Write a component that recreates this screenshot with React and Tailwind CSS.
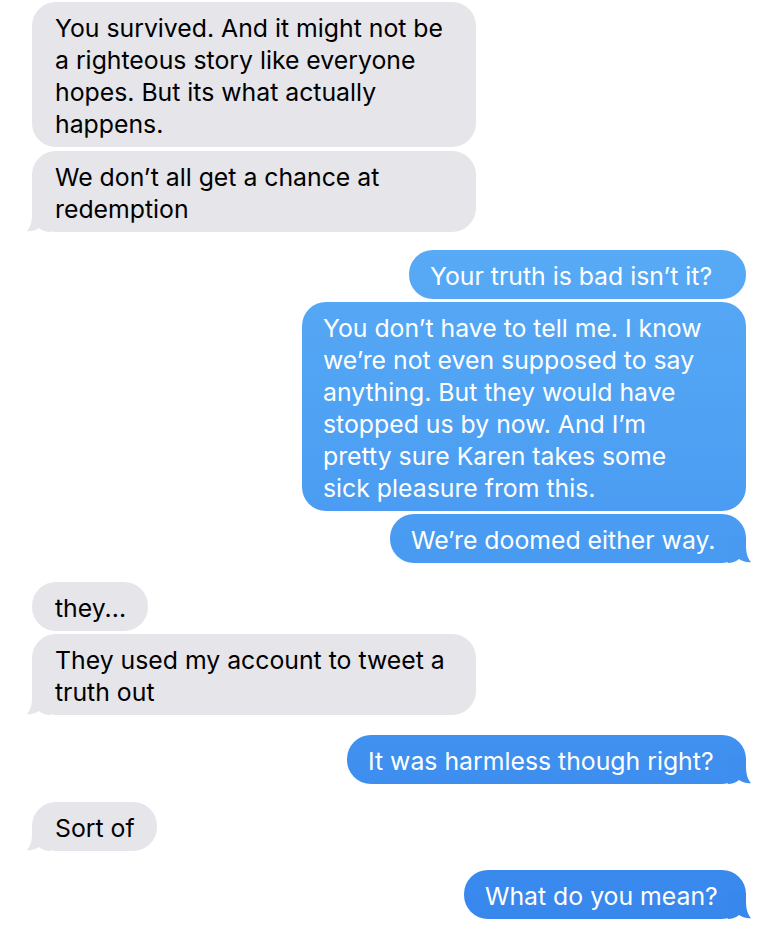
import React from 'react';

const messages = [
  { from: 'them', w: 'w-[444px]', mt: 'mt-0', lines: ['You survived. And it might not be', 'a righteous story like everyone', 'hopes. But its what actually', 'happens.'] },
  { from: 'them', w: 'w-[444px]', mt: 'mt-[4px]', tail: true, lines: ["We don\u2019t all get a chance at", 'redemption'] },
  { from: 'me', w: 'w-[337px]', mt: 'mt-[18px]', lines: ["Your truth is bad isn\u2019t it?"] },
  { from: 'me', w: 'w-[444px]', mt: 'mt-[3px]', lines: ["You don\u2019t have to tell me. I know", "we\u2019re not even supposed to say", 'anything. But they would have', "stopped us by now. And I\u2019m", 'pretty sure Karen takes some', 'sick pleasure from this.'] },
  { from: 'me', w: 'w-[356px]', mt: 'mt-[3px]', tail: '#4999f1', lines: ["We\u2019re doomed either way."] },
  { from: 'them', w: 'w-[116px]', mt: 'mt-[19px]', lines: ['they...'] },
  { from: 'them', w: 'w-[444px]', mt: 'mt-[3px]', tail: true, lines: ['They used my account to tweet a', 'truth out'] },
  { from: 'me', w: 'w-[399px]', mt: 'mt-[20px]', tail: '#3e8eef', lines: ['It was harmless though right?'] },
  { from: 'them', w: 'w-[125px]', mt: 'mt-[18px]', tail: true, lines: ['Sort of'] },
  { from: 'me', w: 'w-[282px]', mt: 'mt-[19px]', tail: '#3887ed', lines: ['What do you mean?'] },
];

const Tail = ({ side, color }) => (
  <svg
    width="26"
    height="26"
    viewBox="0 0 26 26"
    className={side === 'left' ? 'absolute bottom-0 left-[-8px]' : 'absolute bottom-0 right-[-8px] -scale-x-100'}
  >
    <path
      d="M8 0 L8 8 C8 16 6.5 21 3 25.2 C6.5 25.6 11 24.6 15 22 C18 24.5 22 26 26 26 L26 0 Z"
      fill={color}
    />
  </svg>
);

const Bubble = ({ msg }) => {
  const mine = msg.from === 'me';
  return (
    <div className={`flex ${mine ? 'justify-end' : 'justify-start'} ${msg.mt}`}>
      <div
        className={`relative ${msg.w} rounded-[24px] pt-[10px] pb-[7px] ${
          mine
            ? 'pl-[21px] pr-[20px] text-white bg-linear-to-b from-[#64b7f8] to-[#3786ed] bg-fixed'
            : 'pl-[23px] pr-[20px] text-black bg-[#e5e5ea]'
        }`}
      >
        {msg.tail && <Tail side={mine ? 'right' : 'left'} color={mine ? msg.tail : '#e5e5ea'} />}
        <div className="relative">
          {msg.lines.map((l, i) => (
            <div key={i} className="whitespace-nowrap">{l}</div>
          ))}
        </div>
      </div>
    </div>
  );
};

export default function App() {
  return (
    <div
      className="min-h-screen w-full bg-white pt-[2px] pl-[32px] pr-[26px] text-[24.8px] leading-[32px] tracking-[0px]"
      style={{ fontFamily: 'Inter, "Noto Sans", sans-serif' }}
    >
      {messages.map((m, i) => (
        <Bubble key={i} msg={m} />
      ))}
    </div>
  );
}
